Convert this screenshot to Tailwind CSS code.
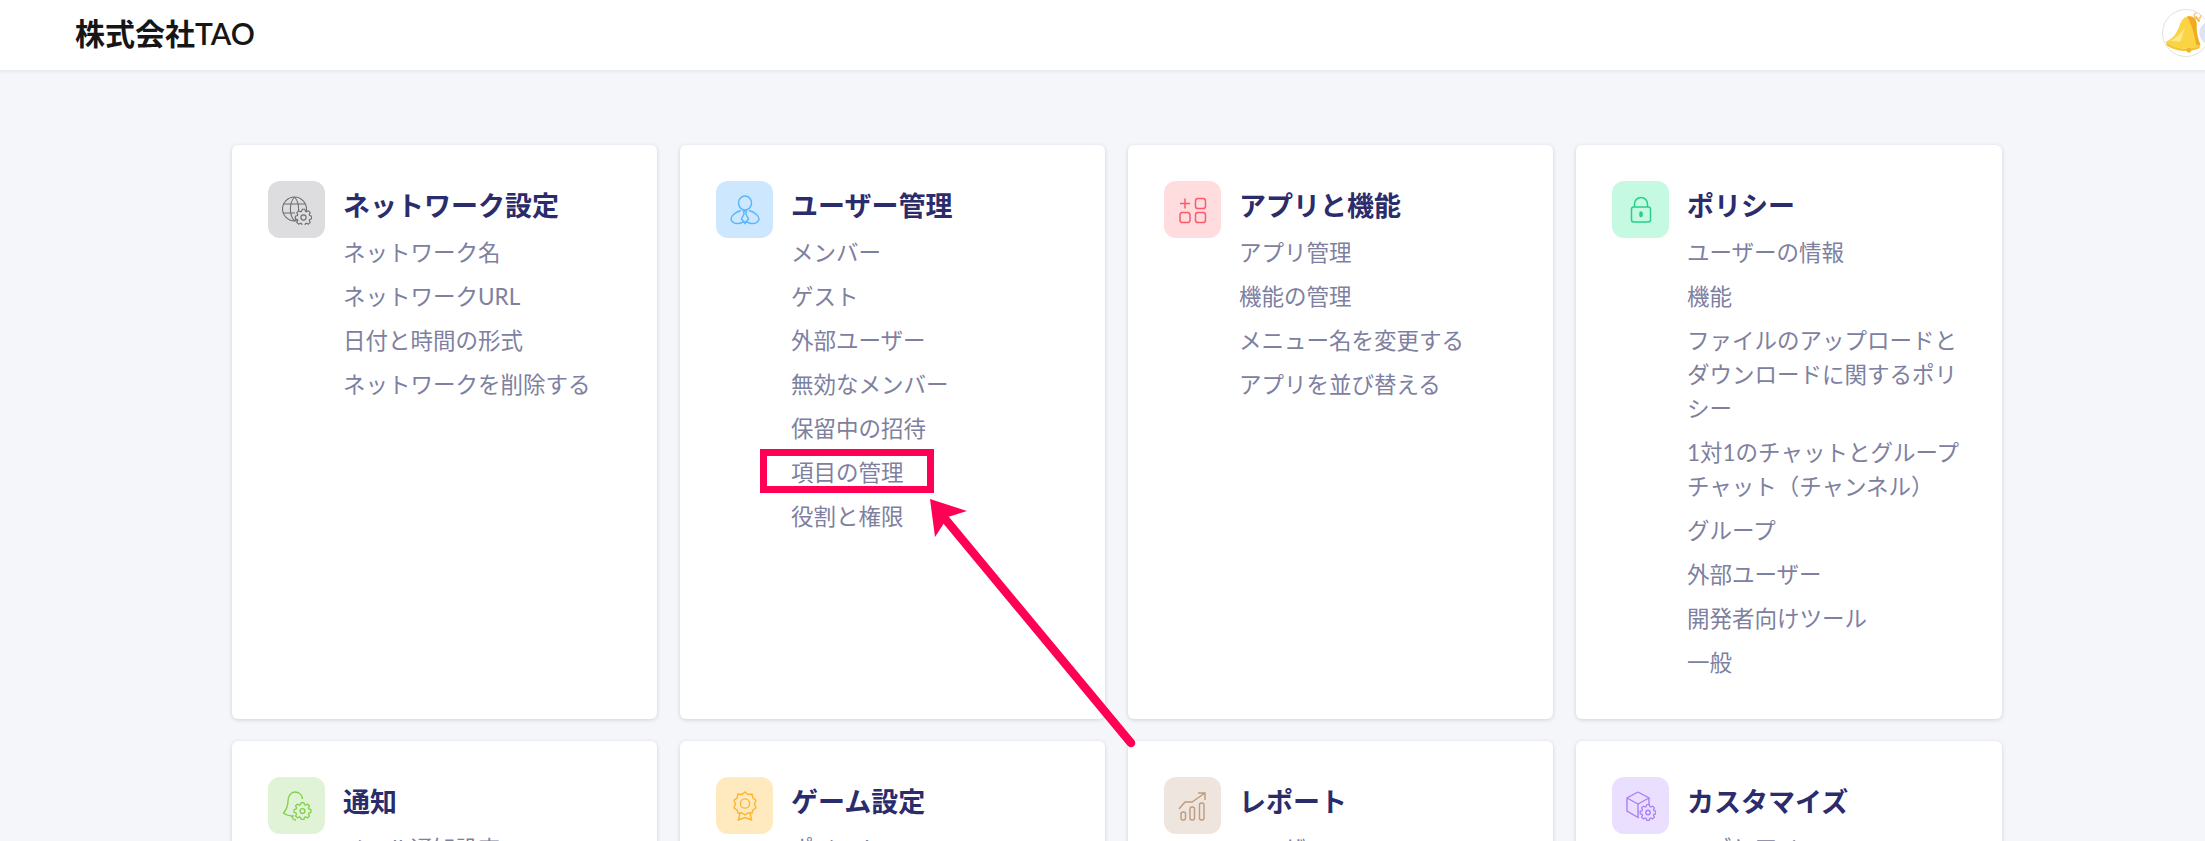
<!DOCTYPE html>
<html lang="ja">
<head>
  <meta charset="UTF-8"/>
  <title>管理者設定</title>
  <script src="https://cdn.jsdelivr.net/npm/@tailwindcss/browser@4"></script>
</head>
<body class="relative h-[841px] overflow-hidden bg-[#f4f6fa] font-['Lato','Noto_Sans_CJK_JP',sans-serif]">

<!-- shared gear outline, centred on 0,0 -->
<svg class="hidden">
  <defs>
    <polygon id="gear" stroke-linejoin="round" points="-2.16,-6.66 -1.41,-8.89 1.41,-8.89 2.16,-6.66 3.18,-6.24 5.29,-7.28 7.28,-5.29 6.24,-3.18 6.66,-2.16 8.89,-1.41 8.89,1.41 6.66,2.16 6.24,3.18 7.28,5.29 5.29,7.28 3.18,6.24 2.16,6.66 1.41,8.89 -1.41,8.89 -2.16,6.66 -3.18,6.24 -5.29,7.28 -7.28,5.29 -6.24,3.18 -6.66,2.16 -8.89,1.41 -8.89,-1.41 -6.66,-2.16 -6.24,-3.18 -7.28,-5.29 -5.29,-7.28 -3.18,-6.24"/>
  </defs>
</svg>

<!-- header -->
<header class="relative flex h-[71px] items-center justify-between overflow-hidden border-b border-[#e9ebf0] bg-white pl-[75px] shadow-[0_1px_3px_rgba(40,50,90,0.08)]">
  <span class="mt-[-3px] text-[30px] font-semibold text-[#161616]">株式会社TAO</span>
  <div class="mr-[-5px] mt-[-4px] h-[48px] w-[48px] shrink-0 overflow-hidden rounded-full border border-[#e2e2e2] bg-white">
    <svg viewBox="0 0 48 48" class="h-full w-full">
      <circle cx="50" cy="24" r="12" fill="#dfe4f2"/>
      <path d="M34 7 L38 12" stroke="#f0a628" stroke-width="2" fill="none"/>
      <circle cx="36" cy="6" r="3.4" fill="none" stroke="#f3c77a" stroke-width="1.6"/>
      <path d="M25 7 C31 5 36 10 35 17 C35 26 37 31 39 36 C30 43 14 41 3 33 C10 30 14 25 17 17 C19 11 21 8 25 7 Z" fill="#fbd443"/>
      <path d="M25 7 C31 5 36 10 35 17 C35 26 37 31 39 36 L35 37 C33 28 31 16 25 7 Z" fill="#f3a922"/>
      <path d="M8 32 C15 28 20 24 23 17 C21 25 20 29 18 33 Z" fill="#fee98a"/>
      <path d="M3 33 C14 41 30 43 39 36 L38 40 C28 45 12 43 4 37 Z" fill="#f6c52e"/>
      <circle cx="27" cy="42" r="2.6" fill="#f3b32a"/>
    </svg>
  </div>
</header>

<!-- cards -->
<main class="ml-[232px] mt-[74px] grid grid-cols-[425px_425px_425px_426px] grid-rows-[574px_574px] gap-x-[23px] gap-y-[22px]">

  <section class="flex gap-[18px] rounded-md bg-white p-[36px] shadow-[0_1px_4px_rgba(40,50,90,0.18)]">
    <div class="flex h-[57px] w-[57px] shrink-0 items-center justify-center rounded-xl bg-[#dddddf]">
      <svg viewBox="0 0 30 30" class="h-[30px] w-[30px]" fill="none" stroke="#6d6d70" stroke-width="1.1">
        <circle cx="12.5" cy="14" r="12"/>
        <path d="M2 9 H23 M1 18 H13 M12.5 2 C7 8 7 20 12.5 26 M12.5 2 C18 8 18 20 12.5 26"/>
        <use href="#gear" transform="translate(21.5 22.5) scale(.92)" fill="#dddddf" stroke-width="1.2"/>
        <circle cx="21.5" cy="22.5" r="2.6"/>
      </svg>
    </div>
    <div>
      <h2 class="mb-[12px] mt-[7px] text-[27px] leading-[36px] font-bold text-[#2b2c6c]">ネットワーク設定</h2>
      <ul class="space-y-[10px] text-[22.5px] leading-[34px] text-[#7e80a0]">
        <li>ネットワーク名</li>
        <li>ネットワークURL</li>
        <li>日付と時間の形式</li>
        <li>ネットワークを削除する</li>
      </ul>
    </div>
  </section>

  <section class="flex gap-[18px] rounded-md bg-white p-[36px] shadow-[0_1px_4px_rgba(40,50,90,0.18)]">
    <div class="flex h-[57px] w-[57px] shrink-0 items-center justify-center rounded-xl bg-[#cde7ff]">
      <svg viewBox="0 0 30 30" class="h-[30px] w-[30px]" fill="none" stroke="#5cb6fb" stroke-width="1.5">
        <ellipse cx="15" cy="8" rx="6.5" ry="7"/>
        <path d="M11 15.5 C5 17 1 21 1 24 C1 27 5 29 9 28.5 C12 28 13 27 14.5 26"/>
        <path d="M19 15.5 C25 17 29 21 29 24 C29 27 25 29 21 28.5 C18 28 17 27 15.5 26"/>
        <path d="M13.5 16 L16.5 16 L15.9 19 L18.5 24 L15 28.5 L11.5 24 L14.1 19 Z"/>
      </svg>
    </div>
    <div>
      <h2 class="mb-[12px] mt-[7px] text-[27px] leading-[36px] font-bold text-[#2b2c6c]">ユーザー管理</h2>
      <ul class="space-y-[10px] text-[22.5px] leading-[34px] text-[#7e80a0]">
        <li>メンバー</li>
        <li>ゲスト</li>
        <li>外部ユーザー</li>
        <li>無効なメンバー</li>
        <li>保留中の招待</li>
        <li>項目の管理</li>
        <li>役割と権限</li>
      </ul>
    </div>
  </section>

  <section class="flex gap-[18px] rounded-md bg-white p-[36px] shadow-[0_1px_4px_rgba(40,50,90,0.18)]">
    <div class="flex h-[57px] w-[57px] shrink-0 items-center justify-center rounded-xl bg-[#ffdcde]">
      <svg viewBox="0 0 30 30" class="h-[30px] w-[30px]" fill="none" stroke="#fb5a6c" stroke-width="1.5">
        <path d="M2 8.5 H12 M7 3.5 V13.5"/>
        <rect x="17.5" y="3.5" width="10" height="10" rx="2.6"/>
        <rect x="2" y="17.5" width="10" height="10" rx="2.6"/>
        <rect x="17.5" y="17.5" width="10" height="10" rx="2.6"/>
      </svg>
    </div>
    <div>
      <h2 class="mb-[12px] mt-[7px] text-[27px] leading-[36px] font-bold text-[#2b2c6c]">アプリと機能</h2>
      <ul class="space-y-[10px] text-[22.5px] leading-[34px] text-[#7e80a0]">
        <li>アプリ管理</li>
        <li>機能の管理</li>
        <li>メニュー名を変更する</li>
        <li>アプリを並び替える</li>
      </ul>
    </div>
  </section>

  <section class="flex gap-[18px] rounded-md bg-white p-[36px] shadow-[0_1px_4px_rgba(40,50,90,0.18)]">
    <div class="flex h-[57px] w-[57px] shrink-0 items-center justify-center rounded-xl bg-[#c6f9e2]">
      <svg viewBox="0 0 30 30" class="h-[30px] w-[30px]" fill="none" stroke="#25d08a" stroke-width="1.5">
        <rect x="5.5" y="12" width="19" height="15" rx="2.2"/>
        <path d="M8.5 12 V9 A6.5 6.5 0 0 1 21.5 9 V12"/>
        <rect x="14" y="17" width="2" height="4.5" rx="1" fill="#25d08a"/>
      </svg>
    </div>
    <div>
      <h2 class="mb-[12px] mt-[7px] text-[27px] leading-[36px] font-bold text-[#2b2c6c]">ポリシー</h2>
      <ul class="space-y-[10px] text-[22.5px] leading-[34px] text-[#7e80a0]">
        <li>ユーザーの情報</li>
        <li>機能</li>
        <li>ファイルのアップロードとダウンロードに関するポリシー</li>
        <li>1対1のチャットとグループチャット（チャンネル）</li>
        <li>グループ</li>
        <li>外部ユーザー</li>
        <li>開発者向けツール</li>
        <li>一般</li>
      </ul>
    </div>
  </section>

  <section class="flex gap-[18px] rounded-md bg-white p-[36px] shadow-[0_1px_4px_rgba(40,50,90,0.18)]">
    <div class="flex h-[57px] w-[57px] shrink-0 items-center justify-center rounded-xl bg-[#e1f3d6]">
      <svg viewBox="0 0 30 30" class="h-[30px] w-[30px]" fill="none" stroke="#84cf4e" stroke-width="1.4">
        <path d="M12 25 C8 25 4 24 1.5 22 C5 18 6 15 6 10 C6 5 9 1 13 1 C17 1 20 4 20.5 8"/>
        <path d="M10 25 C10 27 11.5 29 14 29"/>
        <use href="#gear" transform="translate(20.5 20) scale(.95)" fill="#e1f3d6" stroke-width="1.4"/>
        <circle cx="20.5" cy="20" r="2.4"/>
      </svg>
    </div>
    <div>
      <h2 class="mb-[12px] mt-[7px] text-[27px] leading-[36px] font-bold text-[#2b2c6c]">通知</h2>
      <ul class="space-y-[10px] text-[22.5px] leading-[34px] text-[#7e80a0]">
        <li>メール通知設定</li>
      </ul>
    </div>
  </section>

  <section class="flex gap-[18px] rounded-md bg-white p-[36px] shadow-[0_1px_4px_rgba(40,50,90,0.18)]">
    <div class="flex h-[57px] w-[57px] shrink-0 items-center justify-center rounded-xl bg-[#ffe9bf]">
      <svg viewBox="0 0 30 30" class="h-[30px] w-[30px]" fill="none" stroke="#fcb52e" stroke-width="1.4">
        <path d="M15 1 L18 3.5 L22 3 L23 7 L26 9.5 L24.5 13 L26 17 L23 19 L22 22 L18 22 L15 24 L12 22 L8 22 L7 19 L4 17 L5.5 13 L4 9.5 L7 7 L8 3 L12 3.5 Z"/>
        <circle cx="15" cy="12.5" r="4.6"/>
        <path d="M10 22 L8.5 29 L15 26.5 L21.5 29 L20 22"/>
      </svg>
    </div>
    <div>
      <h2 class="mb-[12px] mt-[7px] text-[27px] leading-[36px] font-bold text-[#2b2c6c]">ゲーム設定</h2>
      <ul class="space-y-[10px] text-[22.5px] leading-[34px] text-[#7e80a0]">
        <li>ポイント</li>
      </ul>
    </div>
  </section>

  <section class="flex gap-[18px] rounded-md bg-white p-[36px] shadow-[0_1px_4px_rgba(40,50,90,0.18)]">
    <div class="flex h-[57px] w-[57px] shrink-0 items-center justify-center rounded-xl bg-[#eee5de]">
      <svg viewBox="0 0 30 30" class="h-[30px] w-[30px]" fill="none" stroke="#bf9b7c" stroke-width="1.4">
        <path d="M1 18 L7 11 H14 L27 2 M20 2 H27 V9"/>
        <rect x="3" y="21" width="4.5" height="8" rx="2"/>
        <rect x="12" y="16" width="4.5" height="13" rx="2"/>
        <rect x="21.5" y="12" width="4.5" height="17" rx="2"/>
      </svg>
    </div>
    <div>
      <h2 class="mb-[12px] mt-[7px] text-[27px] leading-[36px] font-bold text-[#2b2c6c]">レポート</h2>
      <ul class="space-y-[10px] text-[22.5px] leading-[34px] text-[#7e80a0]">
        <li>ユーザー</li>
      </ul>
    </div>
  </section>

  <section class="flex gap-[18px] rounded-md bg-white p-[36px] shadow-[0_1px_4px_rgba(40,50,90,0.18)]">
    <div class="flex h-[57px] w-[57px] shrink-0 items-center justify-center rounded-xl bg-[#eadfff]">
      <svg viewBox="0 0 30 30" class="h-[30px] w-[30px]" fill="none" stroke="#ab7ff5" stroke-width="1.4">
        <path d="M12 1 L23 7 V14 M12 1 L1 7 V20 L13 27 M1 7 L12 13 L23 7 M12 13 V26"/>
        <use href="#gear" transform="translate(22 21.5) scale(.88)" fill="#eadfff" stroke-width="1.5"/>
        <circle cx="22" cy="21.5" r="2.2"/>
      </svg>
    </div>
    <div>
      <h2 class="mb-[12px] mt-[7px] text-[27px] leading-[36px] font-bold text-[#2b2c6c]">カスタマイズ</h2>
      <ul class="space-y-[10px] text-[22.5px] leading-[34px] text-[#7e80a0]">
        <li>ロゴとアイコン</li>
      </ul>
    </div>
  </section>
</main>

<!-- annotation over the screenshot -->
<div class="absolute left-[760px] top-[449px] h-[44px] w-[174px] border-[7px] border-[#ff0055]"></div>
<svg class="absolute left-0 top-0 h-[841px] w-[2205px] pointer-events-none" viewBox="0 0 2205 841" fill="none">
  <path d="M1131 743 L946 520" stroke="#ff0055" stroke-width="8.5" stroke-linecap="round"/>
  <path d="M930 499 L967 511 L948 517 L935 537 Z" fill="#ff0055"/>
</svg>
</body>
</html>
